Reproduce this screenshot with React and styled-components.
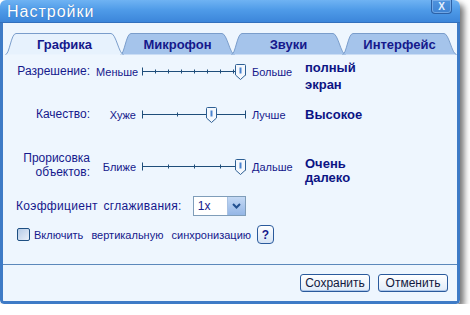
import styled, { createGlobalStyle } from "styled-components";

const GlobalStyle = createGlobalStyle`
  html, body {
    margin: 0;
    padding: 0;
    background: #ffffff;
  }
  body {
    font-family: "Liberation Sans", Arial, sans-serif;
  }
`;

const NAVY = "#15198c";
const TRACK = "#1f4e7a";

const tabs = [
  { name: "Графика", width: 119 },
  { name: "Микрофон", width: 115 },
  { name: "Звуки", width: 115 },
  { name: "Интерфейс", width: 115 },
];

function TabShape({ width, active }) {
  const w = width;
  const d = `M0.5 21.5 C4.5 21.5 6 0.5 11 0.5 L${w - 13} 0.5 C${w - 8} 0.5 ${w - 5} 21.5 ${w - 0.5} 21.5`;
  return (
    <TabBg width={w} height={22} viewBox={`0 0 ${w} 22`}>
      <path d={d + " Z"} fill={active ? "#e7f2fd" : "#a5c4eb"} stroke="none" />
      <path d={d} fill="none" stroke="#7a9dcb" />
    </TabBg>
  );
}

function Slider({ steps, value }) {
  const w = 104;
  const y = 7.5;
  const ticks = Array.from({ length: steps - 1 }, (_, i) => Math.round(((i + 1) * w) / steps) + 0.5);
  const cx = Math.min(Math.max(Math.round((value / steps) * w), 6), w - 6) + 0.5;
  return (
    <Track width={w} height={16} viewBox={`0 0 ${w} 16`}>
      <line x1="0" y1={y} x2={w} y2={y} stroke={TRACK} />
      <line x1="0.5" y1={y - 4} x2="0.5" y2={y + 4} stroke={TRACK} />
      <line x1={w - 0.5} y1={y - 4} x2={w - 0.5} y2={y + 4} stroke={TRACK} />
      {ticks.map((t) => (
        <line key={t} x1={t} y1={y - 2} x2={t} y2={y + 2} stroke={TRACK} />
      ))}
      <path
        d={`M${cx - 4} ${y - 7} H${cx + 4} Q${cx + 5} ${y - 7} ${cx + 5} ${y - 6} V${y + 3.5} L${cx} ${y + 8} L${cx - 5} ${y + 3.5} V${y - 6} Q${cx - 5} ${y - 7} ${cx - 4} ${y - 7} Z`}
        fill="#f4f8fd"
        stroke="#2d5f94"
      />
      <rect x={cx - 1} y={y - 4} width="2" height="6" fill="#4a83cf" />
    </Track>
  );
}

const rows = [
  {
    label: ["Разрешение:"],
    min: "Меньше",
    max: "Больше",
    steps: 8,
    value: 8,
    result: ["полный", "экран"],
    top: 4,
    lead: 5,
    labelLead: 5,
    resultLead: 0,
    resultLine: 17,
  },
  {
    label: ["Качество:"],
    min: "Хуже",
    max: "Лучше",
    steps: 3,
    value: 2,
    result: ["Высокое"],
    top: 12,
    lead: 2,
    labelLead: 2,
    resultLead: 1,
    resultLine: 17,
  },
  {
    label: ["Прорисовка", "объектов:"],
    min: "Ближе",
    max: "Дальше",
    steps: 4,
    value: 4,
    result: ["Очень", "далеко"],
    top: 28,
    lead: 8,
    labelLead: 0,
    resultLead: 6,
    resultLine: 14,
  },
];

export default function App() {
  return (
    <>
      <GlobalStyle />
      <Window>
        <TitleBar>
          <Title>Настройки</Title>
          <CloseButton>X</CloseButton>
        </TitleBar>
        <Body>
          <Tabs>
            {tabs.map((t, i) => (
              <Tab key={t.name} $width={t.width} $active={i === 0} $first={i === 0}>
                <TabShape width={t.width} active={i === 0} />
                <TabLabel>{t.name}</TabLabel>
              </Tab>
            ))}
          </Tabs>
          <Panel>
            {rows.map((r) => (
              <SliderRow key={r.min} $top={r.top}>
                <RowLabel $lead={r.labelLead}>
                  {r.label.map((l) => (
                    <span key={l}>{l}</span>
                  ))}
                </RowLabel>
                <EndLabel $lead={r.lead} $align="right">
                  {r.min}
                </EndLabel>
                <TrackCell $lead={r.lead}>
                  <Slider steps={r.steps} value={r.value} />
                </TrackCell>
                <EndLabel $lead={r.lead} $align="left">
                  {r.max}
                </EndLabel>
                <Result $lead={r.resultLead} $lh={r.resultLine}>
                  {r.result.map((l) => (
                    <span key={l}>{l}</span>
                  ))}
                </Result>
              </SliderRow>
            ))}
            <AntiAliasRow>
              <Caption $size={12} $spacing={2} $tracking={0.3}>
                Коэффициент сглаживания:
              </Caption>
              <Select>
                <SelectValue>1x</SelectValue>
                <SelectArrow>
                  <svg width="9" height="6" viewBox="0 0 9 6">
                    <polyline points="1,1 4.5,4.5 8,1" fill="none" stroke="#23508f" strokeWidth="2" />
                  </svg>
                </SelectArrow>
              </Select>
            </AntiAliasRow>
            <VsyncRow>
              <Checkbox />
              <Caption $size={11} $spacing={5} $tracking={0}>
                Включить вертикальную синхронизацию
              </Caption>
              <HelpButton>?</HelpButton>
            </VsyncRow>
          </Panel>
          <Footer>
            <Button>Сохранить</Button>
            <Button>Отменить</Button>
          </Footer>
        </Body>
      </Window>
    </>
  );
}

const Window = styled.div`
  width: 460px;
  height: 304px;
  display: flex;
  flex-direction: column;
  border-radius: 6px 6px 4px 4px;
  box-shadow: 4px 4px 6px rgba(0, 0, 0, 0.55);
  overflow: hidden;
`;

const TitleBar = styled.div`
  height: 23px;
  flex: none;
  display: flex;
  justify-content: space-between;
  align-items: flex-start;
  background: linear-gradient(180deg, #6fb3f3 0%, #4f9be8 45%, #3c86da 100%);
  border-bottom: 1px solid #3270bd;
  box-sizing: border-box;
`;

const Title = styled.div`
  padding: 3px 0 0 7px;
  font-size: 16px;
  line-height: 18px;
  letter-spacing: 1px;
  color: #ffffff;
  text-shadow: 0 0 1px rgba(20, 60, 130, 0.5);
`;

const CloseButton = styled.div`
  width: 21px;
  height: 14px;
  margin-right: 8px;
  box-sizing: border-box;
  display: flex;
  align-items: center;
  justify-content: center;
  border: 1px solid #2c61a6;
  border-top: none;
  border-radius: 0 0 4px 4px;
  background: linear-gradient(180deg, #4f93de, #3e83d3);
  box-shadow: inset 0 0 0 1px rgba(160, 200, 245, 0.5);
  color: #e4f0ff;
  font-size: 10px;
  font-weight: bold;
`;

const Body = styled.div`
  flex: 1;
  display: flex;
  flex-direction: column;
  background: #eef6fe;
  border: 3px solid #3e7bc6;
  border-top: none;
  border-radius: 0 0 4px 4px;
`;

const Tabs = styled.div`
  display: flex;
  padding: 10px 0 0 2px;
  height: 22px;
  flex: none;
`;

const Tab = styled.div`
  position: relative;
  width: ${(p) => p.$width}px;
  height: 22px;
  margin-left: ${(p) => (p.$first ? 0 : -4)}px;
  z-index: ${(p) => (p.$active ? 2 : 1)};
  display: flex;
  align-items: center;
  justify-content: center;
`;

const TabBg = styled.svg`
  position: absolute;
  left: 0;
  top: 0;
`;

const TabLabel = styled.span`
  position: relative;
  font-size: 13px;
  font-weight: bold;
  color: ${NAVY};
  padding-top: 1px;
`;

const Panel = styled.div`
  flex: 1;
  padding: 0 0 0 7px;
  display: flex;
  flex-direction: column;
`;

const SliderRow = styled.div`
  display: grid;
  grid-template-columns: 80px 40px 104px 48px auto;
  column-gap: 6px;
  align-items: start;
  margin-top: ${(p) => p.$top}px;
  font-size: 12px;
  color: ${NAVY};
`;

const RowLabel = styled.div`
  display: flex;
  flex-direction: column;
  align-items: flex-end;
  text-align: right;
  line-height: 14px;
  margin-top: ${(p) => p.$lead}px;
  font-size: 12px;
`;

const EndLabel = styled.div`
  margin-top: ${(p) => p.$lead}px;
  line-height: 16px;
  font-size: 11px;
  text-align: ${(p) => p.$align};
`;

const TrackCell = styled.div`
  margin-top: ${(p) => p.$lead}px;
  height: 16px;
`;

const Track = styled.svg`
  display: block;
  overflow: visible;
`;

const Result = styled.div`
  display: flex;
  flex-direction: column;
  margin-top: ${(p) => p.$lead}px;
  margin-left: -1px;
  font-size: 13px;
  font-weight: bold;
  line-height: ${(p) => p.$lh}px;
  color: #0c1484;
`;

const AntiAliasRow = styled.div`
  display: flex;
  align-items: center;
  gap: 11px;
  margin-top: 11px;
  padding-left: 6px;
`;

const Caption = styled.span`
  font-size: ${(p) => p.$size}px;
  word-spacing: ${(p) => p.$spacing}px;
  letter-spacing: ${(p) => p.$tracking}px;
  color: ${NAVY};
`;

const Select = styled.div`
  display: flex;
  height: 20px;
  box-sizing: border-box;
  border: 1px solid #7f9db9;
  background: #ffffff;
`;

const SelectValue = styled.div`
  width: 29px;
  padding-left: 4px;
  font-size: 12px;
  line-height: 18px;
  color: ${NAVY};
`;

const SelectArrow = styled.div`
  width: 17px;
  display: flex;
  align-items: center;
  justify-content: center;
  background: linear-gradient(180deg, #c4d9f4, #94b6e6);
  border-left: 1px solid #a9c2e3;
`;

const VsyncRow = styled.div`
  display: flex;
  align-items: center;
  margin-top: 9px;
  padding-left: 7px;
`;

const Checkbox = styled.div`
  width: 13px;
  height: 13px;
  box-sizing: border-box;
  border: 1px solid #1d4f82;
  border-radius: 2px;
  background: linear-gradient(135deg, #b6cbe6, #e9f0f9);
  margin-right: 4px;
`;

const HelpButton = styled.div`
  width: 17px;
  height: 19px;
  box-sizing: border-box;
  margin-left: 6px;
  display: flex;
  align-items: center;
  justify-content: center;
  border: 1px solid #2a5a9c;
  border-radius: 4px;
  background: linear-gradient(180deg, #ffffff, #d6e4f5);
  font-size: 12px;
  font-weight: bold;
  color: ${NAVY};
`;

const Footer = styled.div`
  height: 37px;
  flex: none;
  box-sizing: border-box;
  border-top: 1px solid #5b88bb;
  display: flex;
  align-items: center;
  justify-content: flex-end;
  gap: 8px;
  padding-right: 9px;
`;

const Button = styled.div`
  width: 70px;
  height: 18px;
  box-sizing: border-box;
  display: flex;
  align-items: center;
  justify-content: center;
  border: 1px solid #2a5a9c;
  border-radius: 3px;
  background: linear-gradient(180deg, #ffffff, #e0ebf8);
  box-shadow: inset 0 -1px 0 rgba(120, 160, 215, 0.5);
  font-size: 12px;
  color: #101840;
`;
